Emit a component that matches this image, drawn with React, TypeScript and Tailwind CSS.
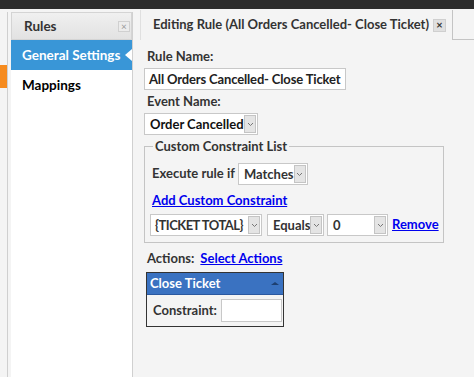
import React from 'react';

function Chevron() {
  return (
    <svg width="7" height="5" viewBox="0 0 7 5" className="text-[#777]">
      <path d="M1 1 L3.5 3.5 L6 1" fill="none" stroke="currentColor" strokeWidth="1" />
    </svg>
  );
}

function Select({ label, width, textClass = '' }: { label: string; width: string; textClass?: string }) {
  return (
    <div className={`flex items-stretch h-[22px] bg-white border border-[#c8c8c8] ${width}`}>
      <span className={`flex-1 pl-[5px] leading-[20px] whitespace-nowrap overflow-hidden ${textClass}`}>{label}</span>
      <span className="w-[12px] my-[1px] mr-[1px] bg-[#e4e4e4] border border-[#c4c4c4] flex items-center justify-center">
        <Chevron />
      </span>
    </div>
  );
}

function App() {
  return (
    <div
      className="w-[474px] h-[377px] overflow-hidden bg-[#f4f4f4] text-[13px] text-[#333] font-bold flex flex-col"
      style={{ fontFamily: 'Lato, "Open Sans", sans-serif' }}
    >
      {/* top bar */}
      <div className="h-[9px] bg-[#2d2d2d] shrink-0" />

      <div className="flex flex-1 pt-[3px]">
        {/* left strip */}
        <div className="w-[8px] border-r border-[#cfcfcf] bg-[#f4f4f4] pt-[53px]">
          <div className="h-[23px] w-[7px] bg-[#f68b1f]" />
        </div>

        {/* rules panel */}
        <div className="ml-[3px] w-[122px] flex flex-col bg-white border-r border-[#d0d0d0]">
          <div className="h-[28px] flex items-center justify-between pl-[12px] pr-[1px] bg-gradient-to-b from-[#f0f0f0] to-[#e2e2e2] border border-[#d4d4d4]">
            <span className="text-[#333] text-[13.5px]">Rules</span>
            <span className="w-[12px] h-[11px] border border-[#d0d0d0] bg-[#ececec] text-[#999] text-[10px] leading-[9px] flex items-center justify-center font-normal">×</span>
          </div>
          <div className="relative h-[30px] bg-[#3996d7] text-white flex items-center pl-[11px] text-[13.5px]">
            General Settings
            <span className="absolute right-0 top-[9px] w-0 h-0 border-y-[6px] border-y-transparent border-r-[7px] border-r-white" />
          </div>
          <div className="h-[30px] flex items-center pl-[11px] text-black text-[13.5px]">Mappings</div>
        </div>

        {/* main */}
        <div className="flex-1 flex flex-col pl-[7px]">
          {/* tab strip */}
          <div className="flex h-[30px] -mt-[2px]">
            <div className="w-[313px] flex items-center pl-[12px] border-r border-[#c4c4c4] border-l border-l-[#e0e0e0]">
              <span className="whitespace-nowrap">Editing Rule (All Orders Cancelled- Close Ticket)</span>
              <span className="ml-[4px] w-[13px] h-[13px] bg-[#e0e0e0] border border-[#cfcfcf] text-[#333] text-[11px] leading-[10px] flex items-center justify-center">×</span>
            </div>
            <div className="flex-1 border-b border-[#c4c4c4]" />
          </div>

          {/* form */}
          <div className="pl-[4px] pt-[8px] flex flex-col">
            <div className="pl-[3px] leading-[17px]">Rule Name:</div>
            <div className="mt-[3px] w-[202px] h-[22px] bg-white border border-[#c8c8c8] pl-[4px] leading-[20px] text-[#222] whitespace-nowrap tracking-[-0.15px]">
              All Orders Cancelled- Close Ticket
            </div>
            <div className="pl-[3px] mt-[1px] leading-[20px]">Event Name:</div>
            <div className="mt-[2px]">
              <Select label="Order Cancelled" width="w-[114px] text-[#111]" />
            </div>

            {/* fieldset */}
            <fieldset className="mt-[2px] w-[298px] border border-[#c4c4c4] pl-[5px] pr-[4px] pb-[6px]">
              <legend className="ml-[3px] px-[2px] leading-[18px]">Custom Constraint List</legend>
              <div className="flex items-center gap-[3px] mt-[8px]">
                <span className="pl-[2px]">Execute rule if</span>
                <Select label="Matches" width="w-[70px]" />
              </div>
              <div className="mt-[6px] pl-[2px] leading-[18px] text-[#0000ee] underline">Add Custom Constraint</div>
              <div className="flex items-center gap-[4px] mt-[5px]">
                <Select label="{TICKET TOTAL}" width="w-[112px]" textClass="!pl-[4px] tracking-[-0.5px]" />
                <Select label="Equals" width="w-[57px] ml-[1px]" />
                <Select label="0" width="w-[61px] -ml-[1px]" />
                <span className="text-[#0000ee] underline">Remove</span>
              </div>
            </fieldset>

            <div className="flex items-center mt-[6px] pl-[3px] leading-[18px]">
              <span>Actions:</span>
              <span className="ml-[6px] text-[#0000ee] underline">Select Actions</span>
            </div>

            {/* action panel */}
            <div className="mt-[5px] ml-[2px] w-[138px] border border-[#333]">
              <div className="h-[22px] bg-[#3a72c1] border-b border-[#2a58a0] text-white flex items-center justify-between pl-[3px] pr-[4px]">
                <span>Close Ticket</span>
                <span className="w-0 h-0 border-x-[4px] border-x-transparent border-b-[3px] border-b-[#1d3f70]" />
              </div>
              <div className="flex items-center justify-between pl-[6px] pr-[1px] py-[4px]">
                <span>Constraint:</span>
                <span className="w-[61px] h-[23px] bg-white border border-[#c8c8c8]" />
              </div>
            </div>
          </div>
        </div>
      </div>
    </div>
  );
}

export default App;
